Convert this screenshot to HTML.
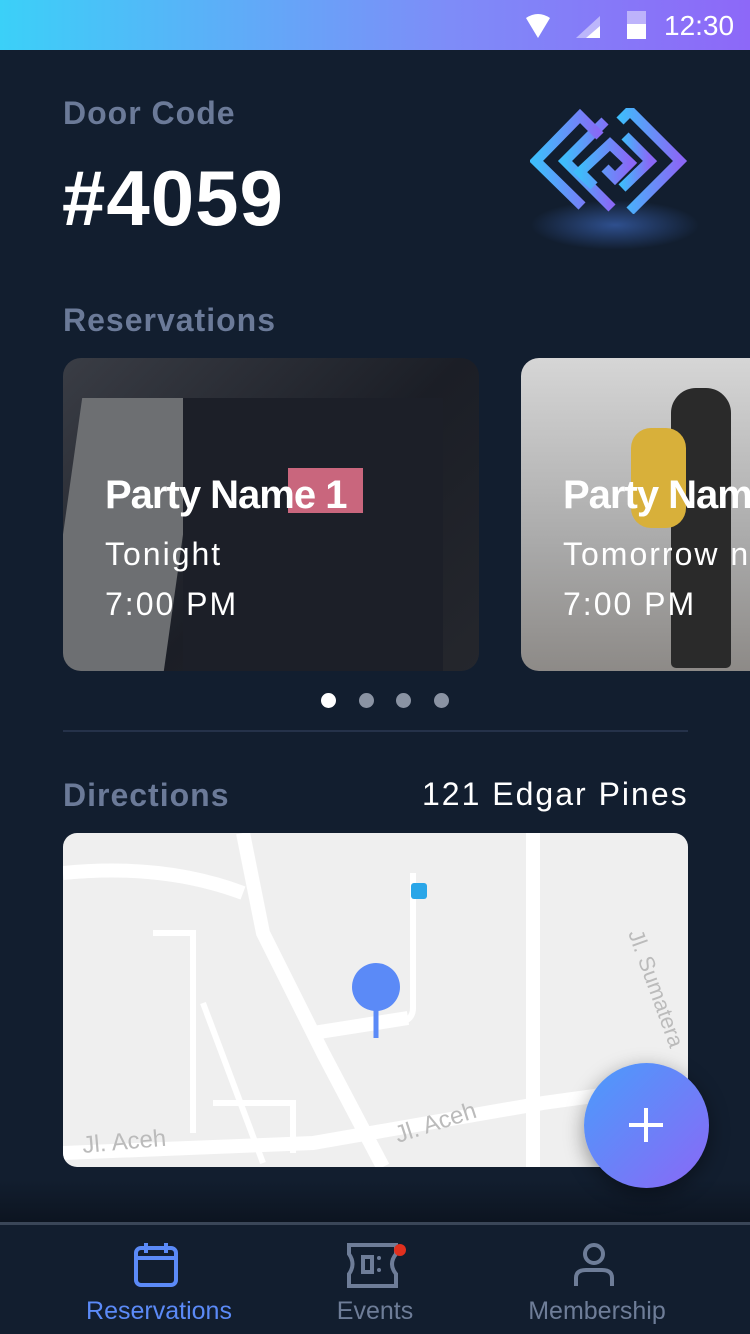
<!DOCTYPE html>
<html><head><meta charset="utf-8"><style>
*{margin:0;padding:0;box-sizing:border-box}
html,body{overflow:hidden}
body{width:750px;height:1334px;background:#121e2f;font-family:"Liberation Sans",sans-serif;position:relative;color:#fff}
.abs{position:absolute;white-space:nowrap}
.sb{left:0;top:0;width:750px;height:50px;background:linear-gradient(90deg,#3bd0f8,#7e8cf8 60%,#8d68f8)}
.lbl{color:#6b7a98;font-weight:bold;font-size:32px;letter-spacing:1px}
.card{border-radius:18px;overflow:hidden}
.ct{font-size:40px;font-weight:bold;letter-spacing:-1px}
.cs{font-size:32px;letter-spacing:2px;font-weight:300}
.dot{width:15px;height:15px;border-radius:50%;background:#8a93a3;top:693px}
.nav{font-size:25px;color:#6e7d98;text-align:center;width:250px}
</style></head><body>
<div class="abs sb"></div>
<svg class="abs" style="left:520px;top:10px" width="90" height="30"><path d="M6 8 Q18 0 30 8 L18 28Z" fill="#fff"/><path d="M56 28 L80 6 L80 28Z" fill="#fff" opacity=".45"/><path d="M66 28 L80 16 L80 28Z" fill="#fff"/></svg>
<div class="abs" style="left:627px;top:11px;width:19px;height:28px;background:rgba(255,255,255,.45)"></div>
<div class="abs" style="left:627px;top:24px;width:19px;height:15px;background:#fff"></div>
<div class="abs" style="left:664px;top:10px;font-size:28px">12:30</div>

<div class="abs lbl" style="left:63px;top:95px">Door Code</div>
<div class="abs" style="left:62px;top:153px;font-size:78px;font-weight:bold;letter-spacing:1px">#4059</div>
<div class="abs" style="left:530px;top:200px;width:170px;height:50px;border-radius:50%;background:radial-gradient(ellipse,rgba(70,120,220,.55),rgba(19,31,48,0) 70%)"></div>
<svg class="abs" style="left:530px;top:108px" width="160" height="106" viewBox="0 0 160 106">
<defs><linearGradient id="g" x1="0" x2="1"><stop offset="0" stop-color="#3fbcfb"/><stop offset="1" stop-color="#8a68f6"/></linearGradient></defs>
<g fill="none" stroke="url(#g)" stroke-width="10">
<path d="M82 100 L35 53 L75 13"/><path d="M52 98 L6 53 L50 8 L70 28"/>
<path d="M64 78 L50 64 L80 36 L100 55 L85 70 L75 60"/>
<path d="M100 103 L150 53 L100 3 L90 13"/><path d="M92 80 L120 53 L95 28"/>
</g></svg>

<div class="abs lbl" style="left:63px;top:302px">Reservations</div>
<div class="abs card" style="left:63px;top:358px;width:416px;height:313px;background:linear-gradient(135deg,#3a3d45,#1b1e26 55%,#25272d)">
<div class="abs" style="left:0;top:40px;width:120px;height:273px;background:#6d6f72;transform:skewX(-8deg)"></div>
<div class="abs" style="left:120px;top:40px;width:260px;height:273px;background:#1c1f28"></div>
<div class="abs" style="left:225px;top:110px;width:75px;height:45px;background:#c9667d"></div>
<div class="abs ct" style="left:42px;top:115px">Party Name 1</div>
<div class="abs cs" style="left:42px;top:178px">Tonight</div>
<div class="abs cs" style="left:42px;top:228px">7:00 PM</div>
</div>
<div class="abs card" style="left:521px;top:358px;width:229px;height:313px;border-radius:18px 0 0 18px;background:linear-gradient(180deg,#d6d6d6,#a9a9a9 60%,#8d8a87)">
<div class="abs" style="left:150px;top:30px;width:60px;height:280px;background:#2a2a2a;border-radius:25px 25px 5px 5px"></div>
<div class="abs" style="left:110px;top:70px;width:55px;height:100px;background:#d8b03a;border-radius:20px"></div>
<div class="abs ct" style="left:42px;top:115px">Party Name 2</div>
<div class="abs cs" style="left:42px;top:178px">Tomorrow night</div>
<div class="abs cs" style="left:42px;top:228px">7:00 PM</div>
</div>
<div class="abs dot" style="left:321px;background:#fff"></div>
<div class="abs dot" style="left:359px"></div>
<div class="abs dot" style="left:396px"></div>
<div class="abs dot" style="left:434px"></div>
<div class="abs" style="left:63px;top:730px;width:625px;height:2px;background:#25324a"></div>

<div class="abs lbl" style="left:63px;top:777px">Directions</div>
<div class="abs" style="left:422px;top:776px;font-size:32px;letter-spacing:2px">121 Edgar Pines</div>
<div class="abs card" style="left:63px;top:833px;width:625px;height:334px;background:#efefef;border-radius:14px">
<svg width="625" height="334"><g fill="none" stroke="#fff" stroke-width="14">
<path d="M180 0 L200 100 L260 220 L320 334"/><path d="M0 40 Q100 30 180 60"/><path d="M0 320 L250 310 L480 270 L625 250"/><path d="M470 0 L470 334"/><path d="M250 200 L345 185"/></g>
<g fill="none" stroke="#fff" stroke-width="6"><path d="M350 40 L350 175 Q350 190 330 190"/><path d="M90 100 L130 100 L130 300"/><path d="M150 270 L230 270 L230 320"/><path d="M140 170 L200 330"/></g>
<rect x="348" y="50" width="16" height="16" rx="3" fill="#2aa6e8"/>
<text x="20" y="320" font-size="24" fill="#bbb" transform="rotate(-5 20 320)">Jl. Aceh</text>
<text x="335" y="310" font-size="24" fill="#bbb" transform="rotate(-18 335 310)">Jl. Aceh</text>
<text x="565" y="100" font-size="22" fill="#bbb" transform="rotate(70 565 100)">Jl. Sumatera</text>
<line x1="313" y1="170" x2="313" y2="205" stroke="#5b8af7" stroke-width="5"/>
<circle cx="313" cy="154" r="24" fill="#5b8af7"/></svg>
</div>

<div class="abs" style="left:0;top:1180px;width:750px;height:43px;background:linear-gradient(rgba(12,20,32,0),#0c1420)"></div>
<div class="abs" style="left:0;top:1222px;width:750px;height:3px;background:#3a4658"></div>
<div class="abs" style="left:584px;top:1063px;width:125px;height:125px;border-radius:50%;background:linear-gradient(135deg,#4a9cfb,#8a68f6);box-shadow:0 6px 20px rgba(0,0,0,.4)"></div>
<div class="abs" style="left:629px;top:1123px;width:34px;height:4px;background:#fff"></div>
<div class="abs" style="left:644px;top:1108px;width:4px;height:34px;background:#fff"></div>
<svg class="abs" style="left:133px;top:1240px" width="48" height="48"><rect x="3" y="8" width="40" height="37" rx="5" fill="none" stroke="#5b8af7" stroke-width="4"/><line x1="3" y1="18" x2="43" y2="18" stroke="#5b8af7" stroke-width="4"/><path d="M13 3v10M33 3v10" stroke="#5b8af7" stroke-width="4"/></svg>
<svg class="abs" style="left:346px;top:1242px" width="60" height="46"><path d="M3 3 H50 V12 Q42 22 50 32 V44 H3 V32 Q10 22 3 12Z" fill="none" stroke="#6e7d98" stroke-width="4"/><rect x="17" y="15" width="9" height="15" fill="none" stroke="#6e7d98" stroke-width="4"/><circle cx="33" cy="16" r="2" fill="#6e7d98"/><circle cx="33" cy="28" r="2" fill="#6e7d98"/><circle cx="54" cy="8" r="6" fill="#e0301e"/></svg>
<svg class="abs" style="left:572px;top:1242px" width="44" height="46"><circle cx="22" cy="12" r="9" fill="none" stroke="#6e7d98" stroke-width="4"/><path d="M4 44 V36 Q4 28 14 28 H30 Q40 28 40 36 V44" fill="none" stroke="#6e7d98" stroke-width="4"/></svg>
<div class="abs nav" style="left:34px;top:1297px;color:#5b8af7">Reservations</div>
<div class="abs nav" style="left:250px;top:1297px">Events</div>
<div class="abs nav" style="left:472px;top:1297px">Membership</div>
</body></html>
